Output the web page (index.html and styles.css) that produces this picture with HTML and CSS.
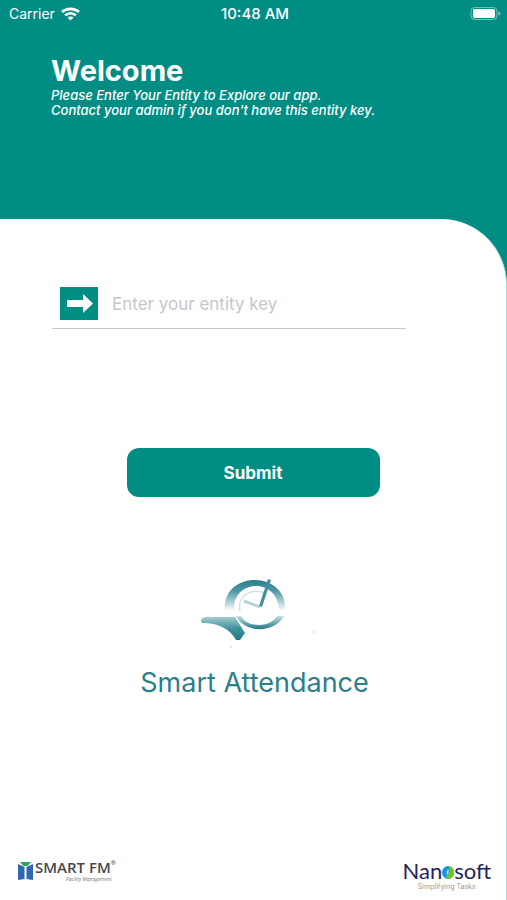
FILE: index.html
```html
<!DOCTYPE html>
<html lang="en">
<head>
  <meta charset="UTF-8">
  <meta name="viewport" content="width=device-width, initial-scale=1.0">
  <title>Smart Attendance</title>
  <link rel="stylesheet" href="styles.css">
</head>
<body>
  <header class="top">
    <div class="status-bar">
      <div class="carrier">
        <span>Carrier</span>
        <svg width="19" height="14" viewBox="0 0 19 14" fill="none" stroke="#fff" stroke-width="2.6">
          <path d="M1 5C5.500 .8 13.500 .8 18 5"/>
          <path d="M4.200 8.400C7.200 5.500 11.800 5.500 14.800 8.400"/>
          <path d="M9.500 13.600L6.600 10.700C8.200 9.200 10.800 9.200 12.400 10.700Z" fill="#fff" stroke="none"/>
        </svg>
      </div>
      <span class="time">10:48 AM</span>
      <div class="battery">
        <svg width="31" height="14" viewBox="0 0 31 14">
          <rect x="1" y="0.500" width="26" height="12" rx="3.500" fill="none" stroke="#fff" stroke-opacity=".45"/>
          <rect x="3" y="2" width="22" height="9" rx="1.500" fill="#fff"/>
          <path d="M28.500 4.500v4q2-.6 2-2t-2-2z" fill="#fff" fill-opacity=".5"/>
        </svg>
      </div>
    </div>
    <div class="intro">
      <h1>Welcome</h1>
      <p>Please Enter Your Entity to Explore our app.<br>Contact your admin if you don't have this entity key.</p>
    </div>
  </header>

  <main class="panel">
    <form class="entity-form">
      <div class="field">
        <label for="entity-key" aria-label="Entity key">
          <svg width="38" height="33" viewBox="0 0 38 33">
            <rect width="38" height="33" fill="#028d84"/>
            <path d="M7 13h16V7l10 9.500L23 26v-6H7z" fill="#fff"/>
          </svg>
        </label>
        <input type="text" id="entity-key" placeholder="Enter your entity key">
      </div>
      <button type="submit" class="submit">Submit</button>
    </form>

    <div class="brand">
      <svg width="120" height="76" viewBox="0 0 120 76">
        <defs>
          <linearGradient id="ring" x1="0" y1="0" x2="0" y2="1">
            <stop offset="0" stop-color="#2b7f8c"/>
            <stop offset=".35" stop-color="#4d98a3"/>
            <stop offset="1" stop-color="#fff"/>
          </linearGradient>
          <linearGradient id="handle" x1="0" y1="0" x2="0" y2="1">
            <stop offset="0" stop-color="#a5cdd2"/>
            <stop offset=".5" stop-color="#3f929d"/>
            <stop offset="1" stop-color="#207985"/>
          </linearGradient>
          <linearGradient id="base" x1="0" y1="0" x2="0" y2="1">
            <stop offset="0" stop-color="#c5e0e3"/>
            <stop offset="1" stop-color="#207985"/>
          </linearGradient>
        </defs>
        <path d="M30 38C28 19 42 7 60 7C78 7 92 20 90 38L84 38C84 23 74 13 61 13C48 13 38 23 39 38Z" fill="url(#ring)"/>
        <path d="M45 38C42 22 56 15 70 20" fill="none" stroke="#d3e2e4" stroke-width="1.500"/>
        <path d="M49 28L65 34" fill="none" stroke="#b9d3d6" stroke-width="3"/>
        <path d="M73 6L76 7L67 34L64 33Z" fill="#458f9b"/>
        <path d="M41 43H46C52 55 75 55 82 43H89C80 60 50 61 41 43Z" fill="url(#base)"/>
        <path d="M10 44H40L50 60L45 67L41 67C35 56 24 50 7 50Q4 46 10 44Z" fill="url(#handle)"/>
        <circle cx="36" cy="74" r="1" fill="#d5dfe0"/>
        <circle cx="36" cy="65" r=".6" fill="#d5dfe0"/>
        <circle cx="119" cy="59" r=".8" fill="#c5d0d1"/>
      </svg>
      <h2>Smart Attendance</h2>
    </div>

    <footer class="partners">
      <div class="smart-fm">
        <svg width="15" height="19" viewBox="0 0 15 19">
          <path d="M0 3L6.500 6V18L0 19Z" fill="#2f67b0"/>
          <path d="M15 3L8.500 6V18L15 19Z" fill="#2f67b0"/>
          <path d="M2 1H13L9.500 5H5.500Z" fill="#22a565"/>
        </svg>
        <div class="smart-fm-text">
          <strong>SMART FM<sup>®</sup></strong>
          <small>Facility Management</small>
        </div>
      </div>
      <div class="nanosoft">
        <div class="nanosoft-name">
          <span>Nan</span>
          <svg width="12" height="13" viewBox="0 0 12 13">
            <ellipse cx="6" cy="6.500" rx="6" ry="6.500" fill="#1494de"/>
            <path d="M6 0C14 0 14 13 6 13C3 12 4 10 6 8C8 6 8 3 6 0Z" fill="#6cc52c"/>
            <path d="M6 3Q8 6 5 9Q4 6 6 3Z" fill="#bfe8ec"/>
          </svg>
          <span>soft</span>
        </div>
        <small>Simplifying Tasks</small>
      </div>
    </footer>
  </main>
</body>
</html>
```

FILE: styles.css
```css
* {
  box-sizing: border-box;
}

body {
  margin: 0;
  min-height: 100vh;
  display: flex;
  flex-direction: column;
  background-color: #028d84;
  font-family: Inter, 'Liberation Sans', sans-serif;
}

/* Header */
.top {
  min-height: 219px;
  color: #fff;
}

.status-bar {
  display: grid;
  grid-template-columns: 1fr auto 1fr;
  align-items: center;
  height: 27px;
  padding: 0 6px 0 9px;
  font-size: 14px;
}

.carrier {
  display: flex;
  align-items: center;
  gap: 6px;
}

.time {
  font-size: 15px;
  font-weight: 500;
}

.battery {
  display: flex;
  justify-content: flex-end;
}

.intro {
  padding: 26px 51px 0;
}

.intro h1 {
  margin: 0;
  font-size: 29px;
  line-height: 35px;
  font-weight: 700;
}

.intro p {
  margin: 0;
  font-size: 13px;
  line-height: 15px;
  font-weight: 500;
  font-style: italic;
}

/* White panel */
.panel {
  flex: 1;
  display: flex;
  flex-direction: column;
  padding-top: 60px;
  background-color: #fff;
  border-right: 1px solid #a6dbd8;
  border-top-right-radius: 66px;
}

.entity-form {
  display: flex;
  flex-direction: column;
}

.field {
  display: flex;
  align-items: center;
  gap: 14px;
  width: 70%;
  height: 50px;
  margin-left: 52px;
  padding-left: 8px;
  border-bottom: 1px solid #c8c8c8;
}

.field label {
  display: flex;
}

.field input {
  flex: 1;
  min-width: 0;
  padding: 0;
  border: none;
  outline: none;
  background: none;
  font-family: inherit;
  font-size: 17px;
}

.field input::placeholder {
  color: #c7c7c9;
}

.submit {
  align-self: center;
  width: 50%;
  height: 49px;
  margin-top: 119px;
  border: none;
  border-radius: 12px;
  background-color: #028d84;
  color: #fff;
  font-family: inherit;
  font-size: 17px;
  font-weight: 700;
  cursor: pointer;
}

/* Logo */
.brand {
  display: flex;
  flex-direction: column;
  align-items: center;
  margin-top: 76px;
  padding-left: 3px;
}

.brand h2 {
  margin: 18px 0 0;
  color: #2b7f8a;
  font-size: 27px;
  line-height: 32px;
  font-weight: 400;
}

/* Partner logos */
.partners {
  display: flex;
  justify-content: space-between;
  align-items: flex-end;
  margin-top: auto;
  padding: 0 15px 9px 18px;
}

.smart-fm {
  display: flex;
  align-items: center;
  gap: 2px;
  padding-bottom: 9px;
}

.smart-fm-text {
  display: flex;
  flex-direction: column;
  color: #48484a;
  font-family: 'Open Sans', sans-serif;
}

.smart-fm-text strong {
  font-size: 15px;
  line-height: 18px;
  font-weight: 600;
}

.smart-fm-text sup {
  font-size: 6px;
  line-height: 1;
  vertical-align: 8px;
}

.smart-fm-text small {
  align-self: flex-end;
  margin-right: 4px;
  color: #77777a;
  font-size: 5px;
  line-height: 6px;
  font-style: italic;
}

.nanosoft {
  display: flex;
  flex-direction: column;
  align-items: center;
}

.nanosoft-name {
  display: flex;
  align-items: baseline;
  color: #24245c;
  font-family: Lato, sans-serif;
  font-size: 22px;
  line-height: 25px;
}

.nanosoft small {
  color: #98989c;
  font-size: 7px;
  line-height: 8px;
}
```
